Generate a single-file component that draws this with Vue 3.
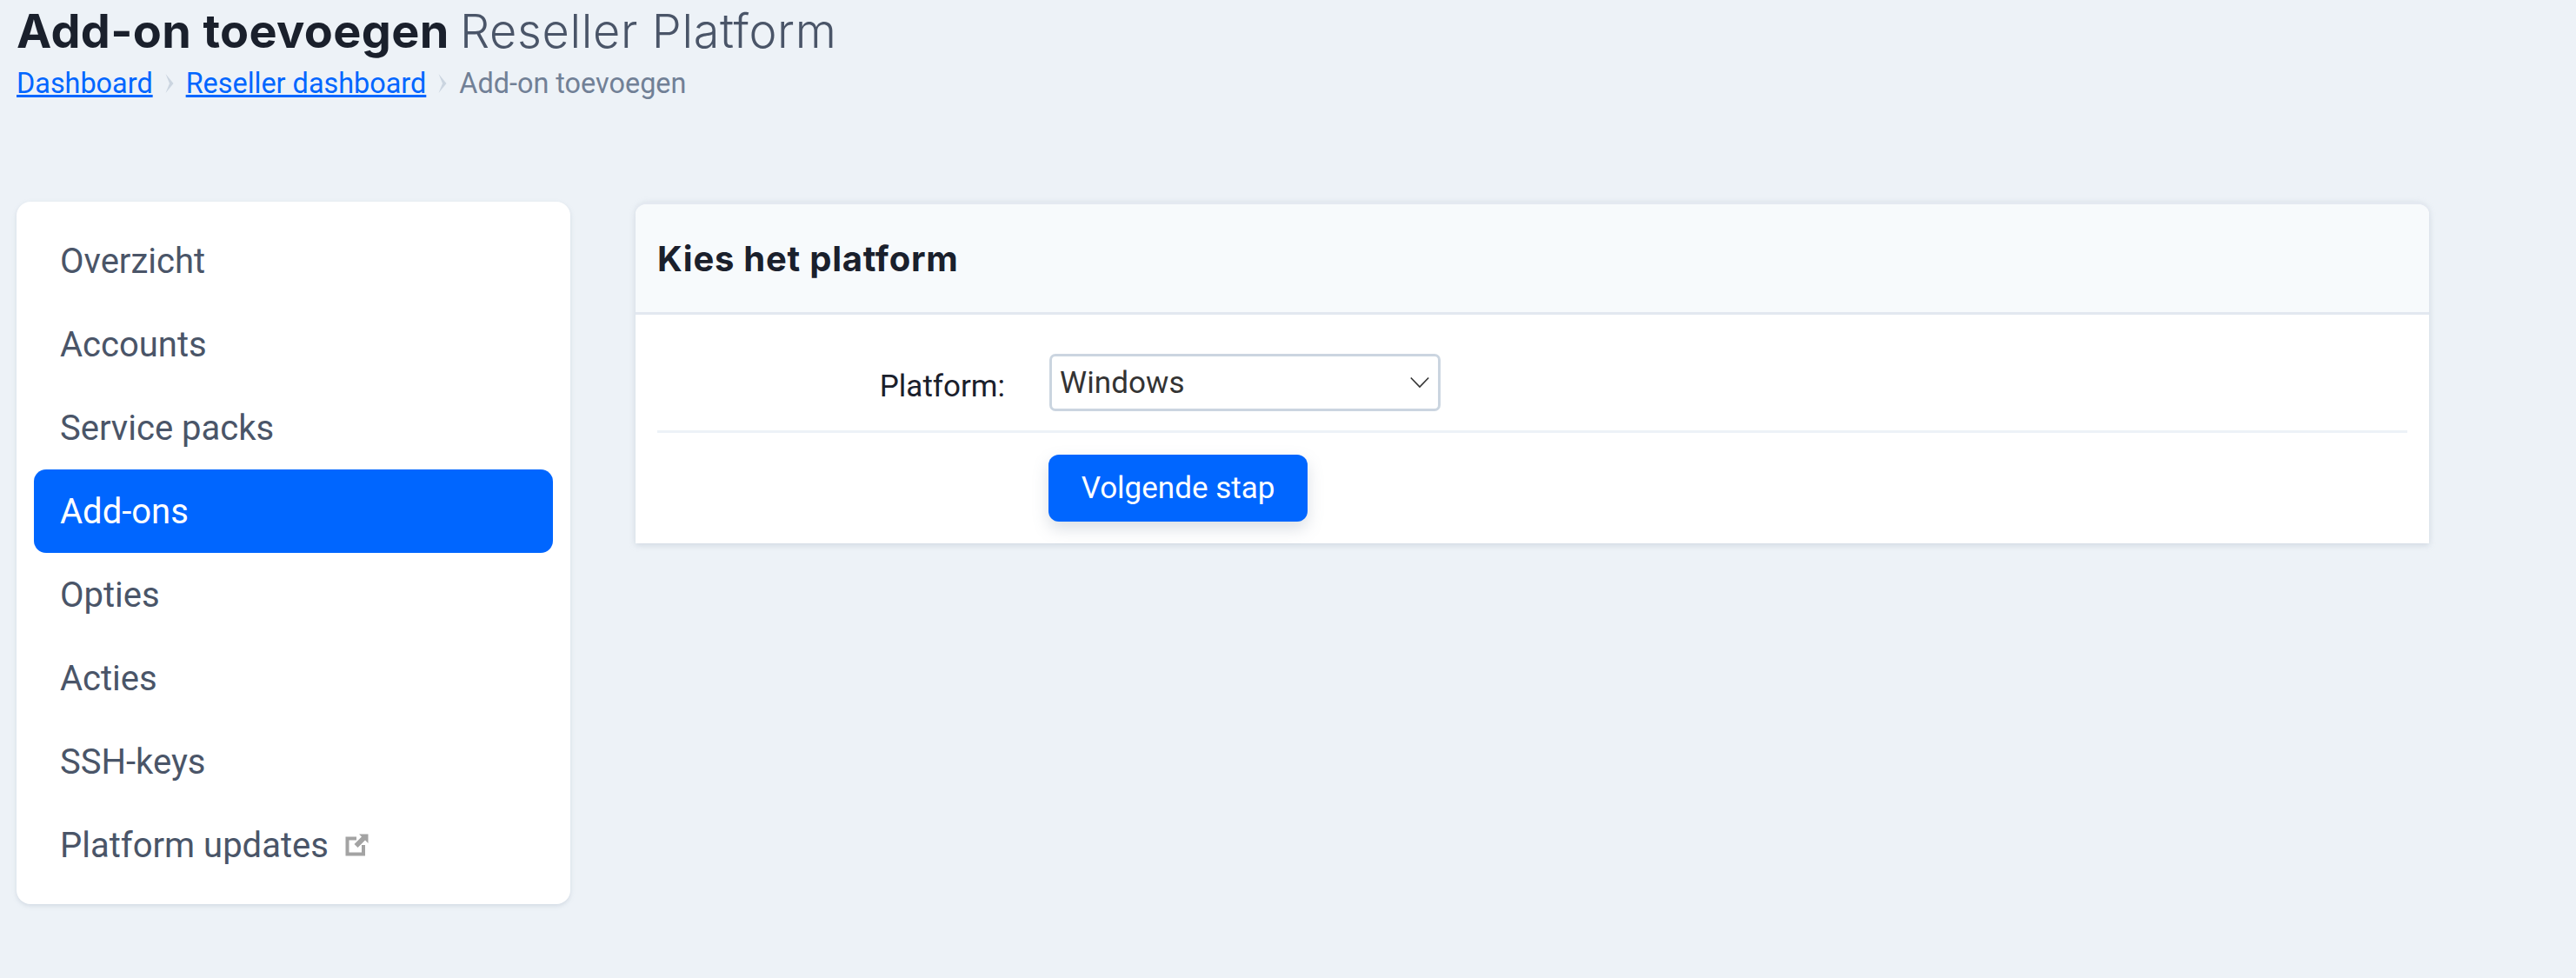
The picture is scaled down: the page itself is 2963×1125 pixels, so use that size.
<script setup>
const items = [
  { label: 'Overzicht' },
  { label: 'Accounts' },
  { label: 'Service packs' },
  { label: 'Add-ons', active: true },
  { label: 'Opties' },
  { label: 'Acties' },
  { label: 'SSH-keys' },
  { label: 'Platform updates', external: true }
]
</script>

<template>
  <div class="page">
    <header class="head">
      <h1 class="title"><strong>Add-on toevoegen</strong> <span>Reseller Platform</span></h1>
      <nav class="crumbs">
        <a href="#">Dashboard</a>
        <svg class="sep" width="10" height="24" viewBox="0 0 10 24"><path d="M0.500 1 L9.500 12 L0.500 23 L5 12 Z" fill="#cbd5e0" /></svg>
        <a href="#">Reseller dashboard</a>
        <svg class="sep" width="10" height="24" viewBox="0 0 10 24"><path d="M0.500 1 L9.500 12 L0.500 23 L5 12 Z" fill="#cbd5e0" /></svg>
        <span>Add-on toevoegen</span>
      </nav>
    </header>
    <div class="layout">
      <aside class="side">
        <a v-for="item in items" :key="item.label" href="#" class="item" :class="{ active: item.active }">
          {{ item.label }}
          <svg v-if="item.external" class="ext" width="27" height="26" viewBox="0 0 27 26">
            <path d="M13 5.500H2.500V23.500H21V13" fill="none" stroke="#a3a3a3" stroke-width="4" />
            <path d="M16 0.500H26.500V11L23 7.500L14.500 16L10.500 12L19 3.500Z" fill="#a3a3a3" />
          </svg>
        </a>
      </aside>
      <main class="card">
        <div class="card-head"><h2>Kies het platform</h2></div>
        <div class="card-body">
          <div class="row field">
            <label class="lbl">Platform:</label>
            <div class="select">
              <span>Windows</span>
              <svg width="22" height="14" viewBox="0 0 22 14"><path d="M0.800 1.500 L11 12 L21.200 1.500" fill="none" stroke="#333" stroke-width="1.600" /></svg>
            </div>
          </div>
          <div class="row actions">
            <button class="btn">Volgende stap</button>
          </div>
        </div>
      </main>
    </div>
  </div>
</template>

<style>
html, body { background: #edf2f7; }
</style>

<style scoped>
.page {
  width: 2963px;
  height: 1125px;
  overflow: hidden;
  background: #edf2f7;
  font-family: Roboto, "Liberation Sans", sans-serif;
  box-sizing: border-box;
  padding: 0 0 0 19px;
}
.head { height: 232px; }
.title {
  margin: 0;
  padding-top: 2px;
  font-family: Inter, "Noto Sans", sans-serif;
  font-size: 54px;
  line-height: 68px;
  font-weight: 400;
  white-space: nowrap;
}
.title strong { font-weight: 700; color: #1a202c; letter-spacing: .35px; }
.title span { font-weight: 300; color: #4a5568; letter-spacing: .65px; margin-left: -3px; }
.crumbs {
  display: flex;
  align-items: center;
  gap: 14px;
  font-size: 32.400px;
  line-height: 48px;
  color: #718096;
  margin-top: 2px;
}
.crumbs a { color: #0066ff; text-decoration: underline; }
.layout { display: flex; gap: 75px; align-items: flex-start; }
.side {
  width: 637px;
  box-sizing: border-box;
  padding: 20px;
  background: #fff;
  border-radius: 16px;
  box-shadow: 0 2px 5px rgba(160, 174, 192, .35);
}
.item {
  display: flex;
  align-items: center;
  gap: 19px;
  height: 96px;
  padding-left: 30px;
  font-size: 40px;
  color: #4a5568;
  text-decoration: none;
  border-radius: 14px;
}
.item.active { background: #0066ff; color: #fff; }
.card {
  width: 2063px;
  background: #fff;
  border-top: 3px solid #e4e9f1;
  border-radius: 14px 14px 0 0;
  box-shadow: 0 2px 7px rgba(160, 174, 192, .4);
}
.card-head {
  height: 124px;
  display: flex;
  align-items: center;
  padding-left: 25px;
  background: #f7fafc;
  border-bottom: 3px solid #e2e8f0;
  border-radius: 12px 12px 0 0;
}
.card-head h2 {
  margin: 0;
  font-family: Inter, "Noto Sans", sans-serif;
  font-size: 40px;
  font-weight: 700;
  letter-spacing: .75px;
  color: #1a202c;
}
.card-body { padding: 0 25px; height: 263px; box-sizing: border-box; }
.row { display: flex; }
.field {
  height: 133px;
  box-sizing: content-box;
  border-bottom: 3px solid #edf2f7;
  align-items: flex-start;
}
.lbl {
  width: 400px;
  margin: 62px 51px 0 0;
  text-align: right;
  font-size: 35px;
  line-height: 42px;
  color: #1a202c;
}
.select {
  width: 450px;
  height: 66px;
  margin-top: 45px;
  box-sizing: border-box;
  border: 3px solid #cbd5e0;
  border-radius: 7px;
  padding: 0 10px 0 9px;
  display: flex;
  align-items: center;
  justify-content: space-between;
  font-size: 35px;
  color: #333;
  letter-spacing: .1px;
}
.actions { padding-top: 25px; padding-left: 450px; }
.btn {
  width: 298px;
  height: 77px;
  border: 0;
  border-radius: 12px;
  background: #0066ff;
  color: #fff;
  font-family: Roboto, sans-serif;
  font-size: 35px;
  box-shadow: 0 8px 18px rgba(113, 128, 150, .25);
}
</style>
